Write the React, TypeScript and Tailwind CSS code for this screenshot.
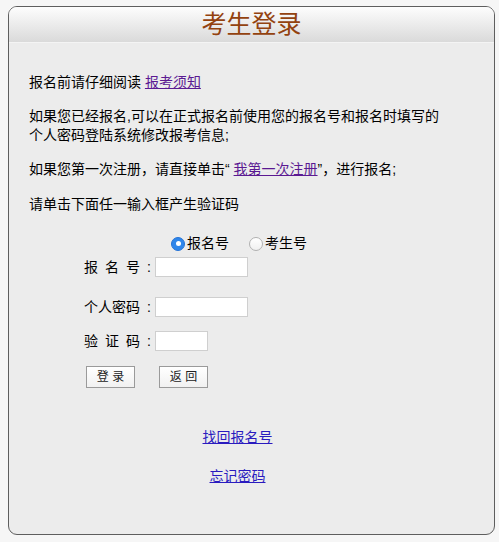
import React from "react";

const font = { fontFamily: '"Liberation Sans","Noto Sans CJK SC",sans-serif' };

function Radio({ checked }: { checked: boolean }) {
  return checked ? (
    <span className="flex h-[14px] w-[14px] items-center justify-center rounded-full bg-[#2f86ea] border border-[#2573d6]">
      <span className="h-[5px] w-[5px] rounded-full bg-white" />
    </span>
  ) : (
    <span className="h-[14px] w-[14px] rounded-full border border-[#b0b0b0] bg-gradient-to-b from-white to-[#f0f0f0]" />
  );
}

export default function App() {
  return (
    <div className="h-[542px] w-[499px] bg-[#f6f6f6] pt-[6px] pl-[8px] text-black" style={font}>
      <div className="flex h-[529px] w-[487px] flex-col overflow-hidden rounded-[9px] border border-[#5e5e5e] bg-[#ececec]">
        <div className="flex h-[36px] items-center justify-center border-b border-[#f4f4f4] bg-gradient-to-b from-[#fdfdfd] to-[#dadada]">
          <span className="text-[25px] leading-none text-[#93420f]">考生登录</span>
        </div>
        <div className="flex flex-col pl-[20px] text-[14px] leading-[19px]">
          <p className="mt-[30px] whitespace-nowrap">
            报名前请仔细阅读 <a href="#" className="text-[#5b1a92] underline">报考须知</a>
          </p>
          <p className="mt-[15px] whitespace-nowrap">
            如果您已经报名,可以在正式报名前使用您的报名号和报名时填写的
            <br />
            个人密码登陆系统修改报考信息;
          </p>
          <p className="mt-[15px] whitespace-nowrap">
            如果您第一次注册，请直接单击“ <a href="#" className="text-[#5b1a92] underline">我第一次注册</a>”，进行报名;
          </p>
          <p className="mt-[16px] whitespace-nowrap">请单击下面任一输入框产生验证码</p>

          <div className="ml-[142px] mt-[20px] flex h-[19px] items-center">
            <Radio checked />
            <span className="ml-[2px]">报名号</span>
            <span className="ml-[20px]" />
            <Radio checked={false} />
            <span className="ml-[2px]">考生号</span>
          </div>

          <div className="ml-[55px] mt-[4px] flex h-[20px] items-center">
            <span className="w-[71px] whitespace-nowrap">
              <span className="tracking-[7px]">报名号</span>:
            </span>
            <span className="h-[20px] w-[93px] border border-[#cfcfcf] bg-white" />
          </div>
          <div className="ml-[55px] mt-[20px] flex h-[20px] items-center">
            <span className="w-[71px] whitespace-nowrap">
              个人密码<span className="ml-[7px]">:</span>
            </span>
            <span className="h-[20px] w-[93px] border border-[#cfcfcf] bg-white" />
          </div>
          <div className="ml-[55px] mt-[14px] flex h-[20px] items-center">
            <span className="w-[71px] whitespace-nowrap">
              <span className="tracking-[7px]">验证码</span>:
            </span>
            <span className="h-[20px] w-[53px] border border-[#cfcfcf] bg-white" />
          </div>

          <div className="ml-[57px] mt-[15px] flex gap-[24px]">
            <button className="flex h-[22px] w-[49px] items-center justify-center border border-[#9a9a9a] bg-gradient-to-b from-white to-[#f1f1f1] text-[12px] text-[#222]">
              登 录
            </button>
            <button className="flex h-[22px] w-[49px] items-center justify-center border border-[#9a9a9a] bg-gradient-to-b from-white to-[#f1f1f1] text-[12px] text-[#222]">
              返 回
            </button>
          </div>
        </div>
        <div className="flex flex-col items-center pr-[28px] text-[14px] leading-[19px]">
          <a href="#" className="mt-[40px] text-[#2a1bbf] underline">找回报名号</a>
          <a href="#" className="mt-[20px] text-[#2a1bbf] underline">忘记密码</a>
        </div>
      </div>
    </div>
  );
}
